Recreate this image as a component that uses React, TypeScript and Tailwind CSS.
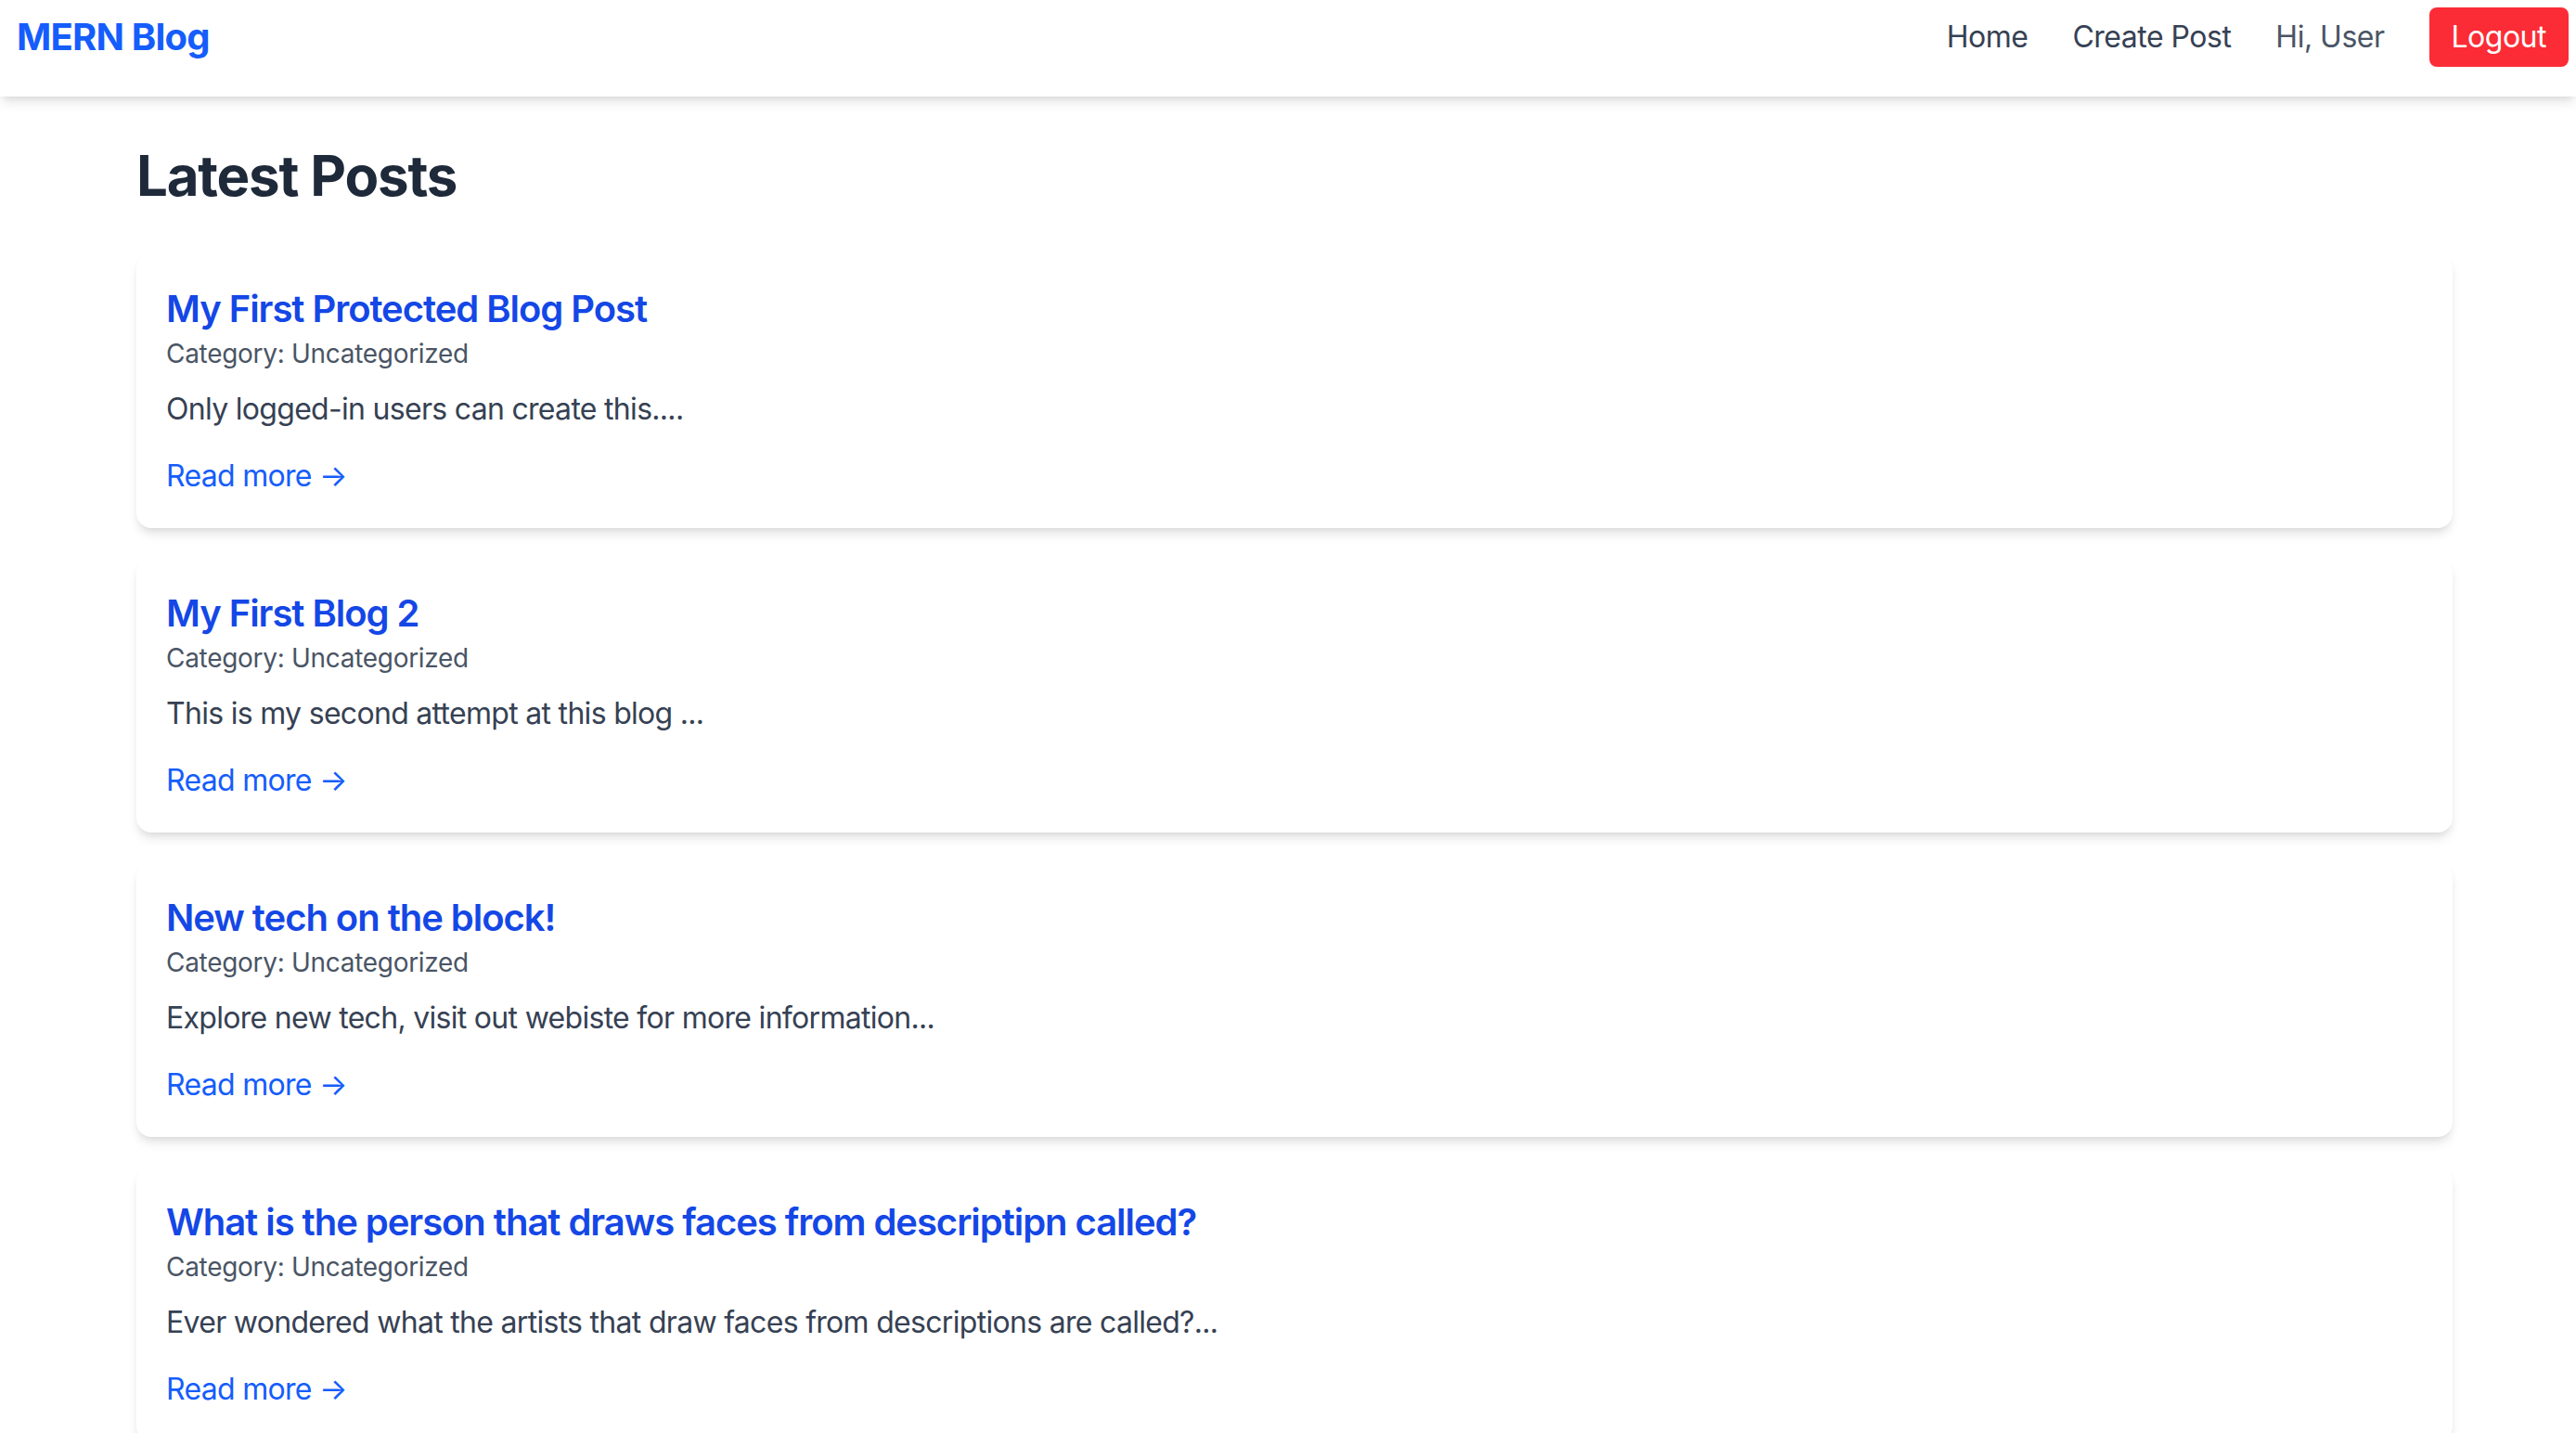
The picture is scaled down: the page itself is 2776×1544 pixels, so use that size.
const posts = [
  {
    title: "My First Protected Blog Post",
    category: "Uncategorized",
    excerpt: "Only logged-in users can create this....",
  },
  {
    title: "My First Blog 2",
    category: "Uncategorized",
    excerpt: "This is my second attempt at this blog ...",
  },
  {
    title: "New tech on the block!",
    category: "Uncategorized",
    excerpt: "Explore new tech, visit out webiste for more information...",
  },
  {
    title: "What is the person that draws faces from descriptipn called?",
    category: "Uncategorized",
    excerpt: "Ever wondered what the artists that draw faces from descriptions are called?...",
  },
];

function Navbar() {
  return (
    <nav className="flex h-[104px] items-start justify-between bg-white pl-[18px] pr-[8px] pt-[8px] shadow-[0_8px_12px_-2px_rgb(0_0_0_/_0.1),0_4px_8px_-4px_rgb(0_0_0_/_0.1)] relative z-10">
      <div className="flex h-[64px] items-center">
        <a href="#" className="text-[40px] font-bold leading-[56px] tracking-[-0.8px] text-blue-600">
          MERN Blog
        </a>
      </div>
      <div className="flex h-[64px] items-center gap-[48px] text-[32px] leading-[48px] tracking-[-0.5px]">
        <a href="#" className="text-gray-700">Home</a>
        <a href="#" className="text-gray-700">Create Post</a>
        <span className="text-gray-600">Hi, User</span>
        <button className="rounded-[8px] bg-red-500 px-[24px] py-[8px] text-white">Logout</button>
      </div>
    </nav>
  );
}

function PostCard({ title, category, excerpt }: { title: string; category: string; excerpt: string }) {
  return (
    <div className="rounded-[16px] bg-white p-[32px] shadow-[0_8px_12px_-2px_rgb(0_0_0_/_0.1),0_4px_8px_-4px_rgb(0_0_0_/_0.1)]">
      <h2 className="text-[40px] font-semibold leading-[56px] tracking-[-1.05px] text-blue-700">
        <a href="#">{title}</a>
      </h2>
      <p className="text-[28px] leading-[40px] tracking-[-0.3px] text-gray-600">Category: {category}</p>
      <p className="mt-[16px] text-[32px] leading-[48px] tracking-[-0.7px] text-gray-700">{excerpt}</p>
      <a href="#" className="mt-[24px] inline-block text-[32px] leading-[48px] tracking-[-0.7px] text-blue-600">
        Read more →
      </a>
    </div>
  );
}

export default function App() {
  return (
    <div className="min-h-screen bg-white font-['Inter','Liberation_Sans',sans-serif]">
      <Navbar />
      <main className="pl-[147px] pr-[133px] pt-[49px]">
        <h1 className="mb-[48px] text-[60px] font-bold leading-[72px] tracking-[-1.2px] text-gray-800">Latest Posts</h1>
        <div className="flex flex-col gap-[32px]">
          {posts.map((p) => (
            <PostCard key={p.title} {...p} />
          ))}
        </div>
      </main>
    </div>
  );
}
